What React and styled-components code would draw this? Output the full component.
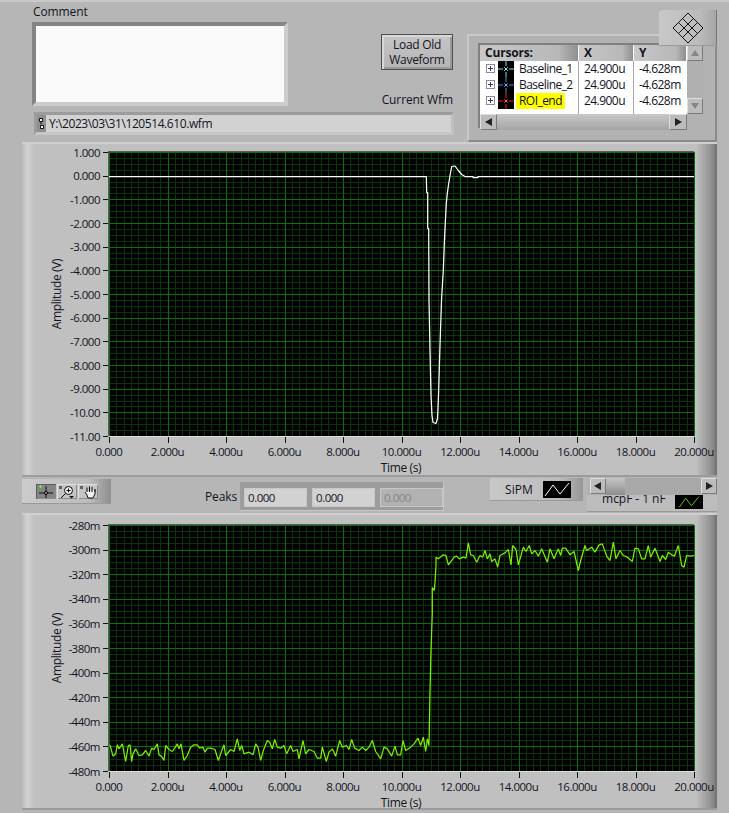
import { Fragment } from 'react';
import styled, { createGlobalStyle } from 'styled-components';

const GlobalStyle = createGlobalStyle`
  html, body { margin: 0; padding: 0; background: #b6b6b6; }
  body { font-family: "Open Sans", "Noto Sans", sans-serif; font-size: 12px; color: #14141e; }
`;

const Page = styled.div`
  position: relative;
  width: 729px;
  height: 813px;
  overflow: hidden;
  background: #b6b6b6;
  display: flex;
  flex-direction: column;
`;

const Top = styled.section`
  height: 142px;
  box-sizing: border-box;
  padding-left: 32px;
  display: flex;
  border-top: 2px solid #c9c9c9;
`;

const MainCol = styled.div`
  width: 422px;
  display: flex;
  flex-direction: column;
`;

const CommentRow = styled.div`
  display: flex;
  justify-content: space-between;
  height: 106px;
`;

const Label = styled.div`
  font-size: 12px;
  line-height: 16px;
  letter-spacing: -0.1px;
`;

const CommentBlock = styled.div`
  padding-top: 2px;
  display: flex;
  flex-direction: column;
  gap: 2px;
`;

const CommentLabel = styled(Label)`
  padding-left: 1px;
`;

const CommentBox = styled.div`
  width: 248px;
  height: 76px;
  background: #fafafa;
  border: 4px solid;
  border-color: #858585 #cccccc #cccccc #858585;
`;

const RightStack = styled.div`
  display: flex;
  flex-direction: column;
  align-items: flex-end;
  justify-content: space-between;
  padding: 32px 1px 0 0;
`;

const LoadButton = styled.button`
  width: 72px;
  height: 36px;
  padding: 0;
  font: inherit;
  font-size: 12px;
  line-height: 15px;
  letter-spacing: -0.3px;
  color: #14141e;
  border: 1px solid #4f4f4f;
  box-shadow: inset 2px 2px 0 #d8d8d8, inset -2px -2px 0 #9a9a9a;
  background: linear-gradient(#c6c6c6, #b4b4b4);
`;

const WfmLabel = styled(Label)`
  line-height: 14px;
  margin-bottom: 1px;
`;

const PathFrame = styled.div`
  margin: 4px 0 0 2px;
  height: 17px;
  display: flex;
  border: 3px solid;
  border-color: #9c9c9c #bfbfbf #c6c6c6 #9c9c9c;
`;

const PathIcon = styled.div`
  width: 9px;
  background: #8f8f8f;
  display: flex;
  align-items: center;
  justify-content: center;
  flex: none;
`;

const PathField = styled.div`
  flex: 1;
  background: #d2d2d2;
  font-size: 12px;
  line-height: 17px;
  padding-left: 3px;
  letter-spacing: -0.42px;
`;

const CursorPanel = styled.div`
  margin: 32px 0 0 13px;
  width: 250px;
  height: 108px;
  box-sizing: border-box;
  padding: 9px 0 0 11px;
  border: 2px solid;
  border-color: #c8c8c8 #8a8a8a #8a8a8a #c8c8c8;
  background: #b2b2b2;
`;

const CursorGrid = styled.div`
  width: 223px;
  display: grid;
  grid-template-columns: 207px 16px;
  grid-template-rows: 69px 16px;
  box-shadow: -2px -2px 0 #808080;
`;

const Table = styled.div`
  background: #fff;
  display: grid;
  grid-template-columns: 99px 55px 53px;
  grid-template-rows: 16px 16px 16px 21px;
  font-size: 12px;
  letter-spacing: -0.55px;
`;

const HeadCell = styled.div`
  background: linear-gradient(90deg, #c8c8c8, #b8b8b8 80%, #8f8f8f);
  font-weight: 700;
  line-height: 15px;
  letter-spacing: -0.2px;
  padding-left: ${(p) => p.$pad}px;
  border-right: 1px solid #fff;
`;

const NameCell = styled.div`
  display: flex;
  align-items: flex-start;
  padding-left: 6px;
  gap: 2px;
  border-right: 1px solid #a8a8a8;
`;

const Cell = styled.div`
  line-height: 16px;
  padding-left: 5px;
  border-right: ${(p) => (p.$last ? 'none' : '1px solid #a8a8a8')};
`;

const Expand = styled.span`
  width: 7px;
  height: 7px;
  margin: 3px 1px 0 0;
  border: 1px solid #8d8d98;
  color: #2c3f80;
  display: flex;
  align-items: center;
  justify-content: center;
  flex: none;
`;

const Name = styled.span`
  padding: 0 3px;
  line-height: 16px;
  background: ${(p) => (p.$hl ? '#ffff00' : 'transparent')};
`;

const VScroll = styled.div`
  background: #b0b0b0;
  display: flex;
  flex-direction: column;
  justify-content: space-between;
`;

const HScroll = styled.div`
  display: flex;
  background: #a9a9a9;
`;

const ScrollBtn = styled.div`
  width: ${(p) => p.$w || 16}px;
  height: 16px;
  flex: none;
  box-sizing: border-box;
  display: flex;
  align-items: center;
  justify-content: center;
  background: #bcbcbc;
  border: 1px solid;
  border-color: #dedede #7b7b7b #7b7b7b #dedede;
`;

const HThumb = styled.div`
  flex: 1;
  background: linear-gradient(#c8c8c8, #a4a4a4);
`;

const Diamond = styled.div`
  position: absolute;
  left: 659px;
  top: 10px;
  width: 57px;
  height: 35px;
  display: flex;
  align-items: center;
  justify-content: center;
  background: linear-gradient(90deg, #c8c8c8, #bcbcbc 70%, #a6a6a6);
  border-right: 1px solid #777;
  border-radius: 4px 0 0 0;
  box-shadow: 0 1px 0 #9a9a9a;
`;

const GraphPanel = styled.section`
  margin-left: 22px;
  width: 695px;
  height: ${(p) => p.$h}px;
  flex: none;
  background: linear-gradient(90deg, #b8b8b8, #d2d2d2 5px, #c0c0c0 13px, #c0c0c0 97%, #8a8a8a 99.4%, #6f6f6f);
  box-shadow: inset 0 2px 0 #cfcfcf, inset 0 -2px 0 #9c9c9c;
  svg { display: block; }
`;

const ToolRow = styled.div`
  position: relative;
  margin-left: 22px;
  width: 695px;
  height: 36px;
  flex: none;
  display: flex;
  align-items: flex-start;
`;

const Palette = styled.div`
  margin-top: 2px;
  width: 89px;
  height: 24px;
  box-sizing: border-box;
  display: flex;
  gap: 1px;
  padding: 5px 0 0 14px;
  background: linear-gradient(90deg, #cbcbcb, #bcbcbc 75%, #8e8e8e);
  box-shadow: 0 1px 0 #9a9a9a;
`;

const ToolBtn = styled.div`
  width: 20px;
  height: 15px;
  display: flex;
  align-items: center;
  justify-content: center;
  background: ${(p) => (p.$on ? '#858585' : '#c4c4c4')};
  box-shadow: inset 1px 1px 0 ${(p) => (p.$on ? '#5c5c5c' : '#e0e0e0')}, inset -1px -1px 0 #8c8c8c;
`;

const PeaksLabel = styled.div`
  margin: 12px 3px 0 94px;
  font-size: 12px;
  line-height: 16px;
  letter-spacing: -0.1px;
`;

const PeakGroup = styled.div`
  display: flex;
  height: 29px;
  margin-top: 5px;
  background: #9c9c9c;
  box-shadow: inset -1px -1px 0 #c8c8c8;
`;

const PeakFrame = styled.div`
  width: 68px;
  box-sizing: border-box;
  padding: 7px 2px 5px 5px;
  display: flex;
`;

const PeakField = styled.div`
  flex: 1;
  height: 17px;
  font-size: 11.5px;
  letter-spacing: -0.5px;
  line-height: 17px;
  padding-left: 3px;
  color: ${(p) => (p.$off ? '#858585' : '#14141e')};
  background: ${(p) => (p.$off ? '#b2b2b2' : '#d2d2d2')};
  box-shadow: 0 0 0 1px #c8c8c8;
`;

const Legend = styled.div`
  width: 93px;
  height: 22px;
  margin: 1px 0 0 46px;
  box-sizing: border-box;
  display: flex;
  align-items: center;
  justify-content: space-between;
  padding: 0 12px 0 15px;
  background: linear-gradient(90deg, #c8c8c8, #bcbcbc 75%, #969696);
  box-shadow: 0 1px 0 #9a9a9a;
`;

const Swatch = styled.div`
  width: 28px;
  height: ${(p) => p.$h}px;
  background: #000;
  display: flex;
  svg { display: block; }
`;

const RightCtl = styled.div`
  margin: 1px 0 0 4px;
  width: 130px;
  display: flex;
  flex-direction: column;
`;

const SlideBar = styled.div`
  position: relative;
  z-index: 1;
  height: 17px;
  display: flex;
  padding-left: 3px;
  background: #b2b2b2;
`;

const SlideThumb = styled.div`
  width: 19px;
  flex: none;
  background: linear-gradient(#c4c4c4, #8e8e8e);
`;

const SlideTrack = styled.div`
  flex: 1;
  background: #a8a8a8;
`;

const SecondLegend = styled.div`
  height: 16px;
  display: flex;
  justify-content: space-between;
  padding: 0 14px 0 15px;
  background: #bdbdbd;
  box-shadow: 0 1px 0 #9a9a9a;
`;

const ClippedText = styled.div`
  font-size: 12px;
  line-height: 16px;
  margin-top: -4px;
  letter-spacing: -0.05px;
`;

// read off the reference, screen coordinates
const pulse = [
  [109, 176], [426.3, 176], [426.7, 192], [427.7, 192], [427.7, 228], [428.7, 228], [429, 300], [430, 350],
  [431, 395], [432, 415], [433, 422], [436, 423], [437.5, 418], [438.5, 395], [440, 345], [441.5, 300],
  [443.3, 270], [444.3, 243], [445.3, 222], [446.3, 203], [447.3, 193], [448.7, 183], [450, 175], [451.7, 166],
  [455, 165.5], [458.3, 170], [461.7, 174], [465, 176], [473, 176], [473, 177], [478, 177], [478, 176], [694, 176],
];

const lowNoise = [
  [3,58],[12,92],[20,85],[25,58],[30,70],[40,55],[50,108],[52,95],[58,60],[63,58],[68,108],[72,85],[80,70],[90,90],[100,88],[110,75],[120,92],[128,68],[135,72],[145,55],[150,88],[157,92],[165,105],[170,60],[180,72],[190,78],[197,68],[205,55],[210,70],[216,55],[225,105],[235,90],[245,65],[255,58],[265,58],[272,68],[282,65],[288,80],[295,68],[305,68],[318,72],[328,105],[335,85],[345,58],[350,90],[365,72],[375,78],[385,40],[392,75],[398,60],[405,85],[420,80],[432,88],[440,55],[447,65],[455,105],[463,75],[475,45],[482,50],[490,70],[497,42],[505,65],[515,68],[525,60],[533,85],[545,60],[552,78],[565,72],[570,100],[582,45],[590,85],[600,72],[615,78],[625,98],[635,98],[640,65],[652,108],[660,80],[670,70],[680,92],[692,45],[700,65],[712,60],[720,72],[728,42],[737,68],[750,75],[760,65],[770,75],[780,65],[790,45],[800,78],[815,100],[825,65],[835,70],[848,92],[858,62],[865,88],[875,88],[882,45],[890,75],[905,65],[915,55],[927,38],[935,60],[943,35],[950,78],[955,40],
].map(([x, y]) => [x / 3 + 109, y / 3 + 725]);

const highNoise = [
  [18,65],[25,70],[40,58],[48,60],[55,88],[65,75],[72,65],[80,62],[88,70],[100,65],[108,68],[115,22],[122,58],[130,60],[140,80],[150,60],[158,65],[165,45],[172,70],[180,55],[185,78],[195,70],[203,95],[210,60],[225,52],[235,42],[243,88],[248,30],[258,42],[265,88],[280,35],[288,48],[298,30],[305,55],[315,45],[325,62],[335,40],[352,80],[360,40],[372,70],[385,40],[392,60],[397,38],[407,38],[420,58],[432,48],[445,105],[452,75],[465,30],[470,45],[485,35],[495,50],[507,28],[517,25],[530,62],[540,75],[550,20],[558,70],[570,45],[580,60],[592,65],[607,78],[615,38],[625,40],[635,70],[645,70],[655,30],[662,65],[675,38],[690,78],[697,60],[707,72],[715,50],[725,58],[733,62],[745,30],[755,90],[762,95],[770,60],[780,62],[793,60],
].map(([x, y]) => [x / 3 + 430, y / 3 + 535]);

const mcpTrace = [
  ...lowNoise,
  [429, 745], [430, 690], [431, 650], [431.7, 630], [432.3, 613], [432.3, 587], [434.3, 590], [435, 582], [436, 565],
  ...highNoise,
];

const xLabels = ['0.000', '2.000u', '4.000u', '6.000u', '8.000u', '10.000u', '12.000u', '14.000u', '16.000u', '18.000u', '20.000u'];
const topLabels = ['1.000', '0.000', '-1.000', '-2.000', '-3.000', '-4.000', '-5.000', '-6.000', '-7.000', '-8.000', '-9.000', '-10.00', '-11.00'];
const lowLabels = ['-280m', '-300m', '-320m', '-340m', '-360m', '-380m', '-400m', '-420m', '-440m', '-460m', '-480m'];

const range = (from, to, step) => {
  const out = [];
  for (let v = from; v <= to + 0.01; v += step) out.push(v);
  return out;
};

function Chart({ panelY, panelH, left, top, bottom, yLabels, timeY, ampY, trace, color }) {
  const right = 694;
  const xStep = (right - left) / 10;
  const yStep = (bottom - top) / (yLabels.length - 1);
  const round = (v) => Math.round(v) + 0.5;
  return (
    <svg width="695" height={panelH} viewBox={`22 ${panelY} 695 ${panelH}`}>
      <rect x={left} y={top} width={right - left} height={bottom - top} fill="#000" />
      <g strokeWidth="1" shapeRendering="crispEdges">
        {range(left, right, xStep / 8).map((x) => (
          <line key={`vm${x}`} x1={round(x)} x2={round(x)} y1={top} y2={bottom} stroke="#073507" />
        ))}
        {range(top, bottom, yStep / 4).map((y) => (
          <line key={`hm${y}`} x1={left} x2={right} y1={round(y)} y2={round(y)} stroke="#073507" />
        ))}
        {range(left, right, xStep).map((x) => (
          <line key={`vM${x}`} x1={round(x)} x2={round(x)} y1={top} y2={bottom} stroke="#087008" />
        ))}
        {range(top, bottom, yStep).map((y) => (
          <line key={`hM${y}`} x1={left} x2={right} y1={round(y)} y2={round(y)} stroke="#087008" />
        ))}
        <line x1={left - 0.5} x2={left - 0.5} y1={top - 1} y2={bottom} stroke="#5a5a5a" />
        <line x1={left} x2={right} y1={top - 0.5} y2={top - 0.5} stroke="#5a5a5a" />
        <line x1={left} x2={right} y1={bottom + 0.5} y2={bottom + 0.5} stroke="#e0e0e0" />
        {yLabels.map((l, i) => (
          <line key={l} x1={left - 6} x2={left - 1} y1={round(top + i * yStep)} y2={round(top + i * yStep)} stroke="#111" />
        ))}
        {xLabels.map((l, i) => (
          <line key={l} x1={round(left + i * xStep)} x2={round(left + i * xStep)} y1={bottom + 1} y2={bottom + 7} stroke="#111" />
        ))}
      </g>
      <polyline
        points={trace.map(([x, y]) => `${x},${y + 0.5}`).join(' ')}
        fill="none"
        stroke={color}
        strokeWidth="1.25"
        strokeLinejoin="bevel"
      />
      <g fontFamily={'"Open Sans", sans-serif'} fill="#14141e">
        <g fontSize="11.5" letterSpacing="-0.5">
          {yLabels.map((l, i) => (
            <text key={l} x={left - 9} y={top + i * yStep + 4.5} textAnchor="end">{l}</text>
          ))}
          {xLabels.map((l, i) => (
            <text key={l} x={left + i * xStep} y={bottom + 19.5} textAnchor="middle">{l}</text>
          ))}
        </g>
        <g fontSize="12" letterSpacing="-0.35">
          <text x="401" y={timeY} textAnchor="middle">Time (s)</text>
          <text transform={`translate(61 ${ampY}) rotate(-90)`} textAnchor="middle">Amplitude (V)</text>
        </g>
      </g>
    </svg>
  );
}

const Arrow = ({ d, fill = '#222' }) => (
  <svg width="10" height="10" viewBox="0 0 10 10"><path d={d} fill={fill} /></svg>
);

const CursorIcon = ({ color }) => (
  <svg width="16" height="16" viewBox="0 0 16 16" style={{ background: '#000', flex: 'none' }}>
    <path d="M8 0v5M8 11v5M0 8h5M11 8h5" stroke={color} strokeWidth="1" />
    <path d="M6 6l4 4M10 6l-4 4" stroke={color} strokeWidth="1" opacity="0.9" />
    <circle cx="8" cy="8" r="1" fill="#fff" opacity="0.5" />
  </svg>
);

const PlusIcon = () => (
  <svg width="7" height="7" viewBox="0 0 7 7"><path d="M3.5 1v5M1 3.5h5" stroke="currentColor" strokeWidth="1" /></svg>
);

const LineSwatch = ({ color, h = 17 }) => (
  <svg width="28" height={h} viewBox="0 0 28 17">
    <path d="M2 15L10 4l7 9 9-11" fill="none" stroke={color} strokeWidth="1" />
  </svg>
);

const rows = [
  { name: 'Baseline_1', color: '#6fe8e8' },
  { name: 'Baseline_2', color: '#3d8ee8' },
  { name: 'ROI_end', color: '#ff1a1a', hl: true },
];

export default function App() {
  return (
    <Page>
      <GlobalStyle />
      <Top>
        <MainCol>
          <CommentRow>
            <CommentBlock>
              <CommentLabel>Comment</CommentLabel>
              <CommentBox />
            </CommentBlock>
            <RightStack>
              <LoadButton>Load Old<br />Waveform</LoadButton>
              <WfmLabel>Current Wfm</WfmLabel>
            </RightStack>
          </CommentRow>
          <PathFrame>
            <PathIcon>
              <svg width="7" height="13" viewBox="0 0 7 13">
                <path d="M1.500 1.500h3v3h-3zM3 4.500v3M2.500 8.500h3v3h-3z" fill="#fff" stroke="#111" strokeWidth="1" />
              </svg>
            </PathIcon>
            <PathField>Y:\2023\03\31\120514.610.wfm</PathField>
          </PathFrame>
        </MainCol>
        <CursorPanel>
          <CursorGrid>
            <Table>
              <HeadCell $pad={5}>Cursors:</HeadCell>
              <HeadCell $pad={5}>X</HeadCell>
              <HeadCell $pad={5}>Y</HeadCell>
              {rows.map((r) => (
                <Fragment key={r.name}>
                  <NameCell>
                    <Expand><PlusIcon /></Expand>
                    <CursorIcon color={r.color} />
                    <Name $hl={r.hl}>{r.name}</Name>
                  </NameCell>
                  <Cell>24.900u</Cell>
                  <Cell $last>-4.628m</Cell>
                </Fragment>
              ))}
              <NameCell />
              <Cell />
              <Cell $last />
            </Table>
            <VScroll>
              <ScrollBtn><Arrow d="M5 2l4 6H1z" fill="#858585" /></ScrollBtn>
              <ScrollBtn><Arrow d="M1 2h8L5 8z" fill="#858585" /></ScrollBtn>
            </VScroll>
            <HScroll>
              <ScrollBtn $w={17}><Arrow d="M1 5l7-4v8z" /></ScrollBtn>
              <HThumb />
              <ScrollBtn $w={18}><Arrow d="M9 5L2 1v8z" /></ScrollBtn>
            </HScroll>
          </CursorGrid>
        </CursorPanel>
      </Top>
      <Diamond>
        <svg width="32" height="32" viewBox="0 0 32 32">
          <path
            d="M16 1l15 15-15 15L1 16zM10.500 6.500l15 15M6.500 10.500l15 15M21.500 6.500l-15 15M25.500 10.500l-15 15"
            fill="none"
            stroke="#111"
            strokeWidth="1"
          />
        </svg>
      </Diamond>
      <GraphPanel $h={335}>
        <Chart
          panelY={142}
          panelH={335}
          left={109}
          top={152}
          bottom={436}
          yLabels={topLabels}
          timeY={472}
          ampY={294}
          trace={pulse}
          color="#fff"
        />
      </GraphPanel>
      <ToolRow>
        <Palette>
          <ToolBtn $on>
            <svg width="18" height="14" viewBox="0 0 18 14">
              <path d="M9 1v12M2 8h14" stroke="#111" strokeWidth="1" />
              <circle cx="9" cy="8" r="1.600" fill="#858585" stroke="#111" />
              <path d="M2 1.500h3M3.500 0v3" stroke="#5fff3f" strokeWidth="1" />
            </svg>
          </ToolBtn>
          <ToolBtn>
            <svg width="18" height="14" viewBox="0 0 18 14">
              <rect x="1" y="1" width="3" height="3" fill="#5f6a4f" />
              <circle cx="10.500" cy="5.500" r="4" fill="#ededed" stroke="#111" />
              <path d="M10.500 3.500v4M8.500 5.500h4M7.500 8.500L3 13" stroke="#111" strokeWidth="1" />
              <path d="M11 11h5l-2.500 2.500z" fill="#111" />
            </svg>
          </ToolBtn>
          <ToolBtn>
            <svg width="18" height="14" viewBox="0 0 18 14">
              <rect x="1" y="1" width="3" height="3" fill="#5f6a4f" />
              <path d="M6 7l2 3 1 3h5l2-4V4.500M8 7V2.500M10.500 7V1.500M13 7V2M16 7V4" fill="#f0f0f0" stroke="#111" strokeWidth="1" />
            </svg>
          </ToolBtn>
        </Palette>
        <PeaksLabel>Peaks</PeaksLabel>
        <PeakGroup>
          <PeakFrame><PeakField>0.000</PeakField></PeakFrame>
          <PeakFrame><PeakField>0.000</PeakField></PeakFrame>
          <PeakFrame><PeakField $off>0.000</PeakField></PeakFrame>
        </PeakGroup>
        <Legend>
          <span>SiPM</span>
          <Swatch $h={17}><LineSwatch color="#fff" /></Swatch>
        </Legend>
        <RightCtl>
          <SlideBar>
            <ScrollBtn><Arrow d="M1 5l7-4v8z" /></ScrollBtn>
            <SlideThumb />
            <SlideTrack />
            <ScrollBtn><Arrow d="M9 5L2 1v8z" /></ScrollBtn>
          </SlideBar>
          <SecondLegend>
            <ClippedText>mcpF - 1 nF</ClippedText>
            <Swatch $h={14}><LineSwatch color="#7cf000" h={14} /></Swatch>
          </SecondLegend>
        </RightCtl>
      </ToolRow>
      <GraphPanel $h={297}>
        <Chart
          panelY={513}
          panelH={297}
          left={109}
          top={525}
          bottom={771}
          yLabels={lowLabels}
          timeY={807}
          ampY={648}
          trace={mcpTrace}
          color="#7cf000"
        />
      </GraphPanel>
    </Page>
  );
}
